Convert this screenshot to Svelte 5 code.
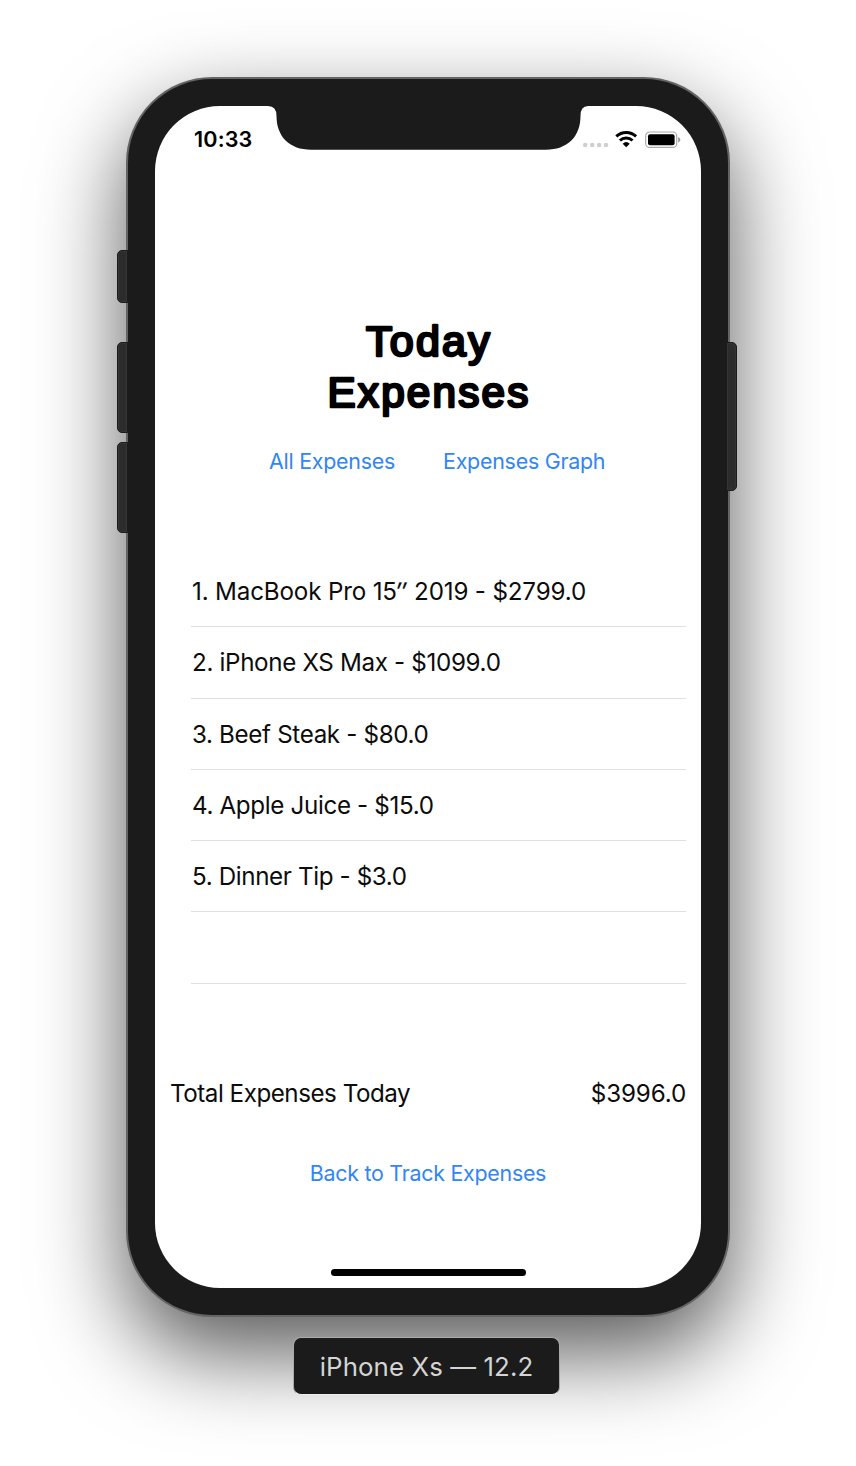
<script>
  const expenses = [
    { text: '1. MacBook Pro 15', mark: '″', rest: ' 2019 - $2799.0', spacing: -0.17 },
    { text: '2. iPhone XS Max - $1099.0', spacing: -0.34 },
    { text: '3. Beef Steak - $80.0', spacing: -0.35 },
    { text: '4. Apple Juice - $15.0', spacing: -0.35 },
    { text: '5. Dinner Tip - $3.0', spacing: -0.38 },
    { text: '', spacing: 0 }
  ];
</script>

<main class="page">
  <div class="phone">
    <i class="key mute"></i>
    <i class="key up"></i>
    <i class="key down"></i>
    <i class="key power"></i>
    <div class="screen">
      <svg class="notch" width="320" height="45" viewBox="0 0 320 45">
        <path d="M0-1V0Q8.5 0 8.5 10C8.5 31 22 43.7 43 43.7H278C299 43.7 312.5 31 312.5 10Q312.5 0 320 0V-1Z" fill="#1b1b1b" />
      </svg>
      <header class="status">
        <span class="time">10:33</span>
        <svg class="icons" width="100" height="20" viewBox="0 0 100 20">
          <g fill="#cfcfcf">
            <circle cx="4.2" cy="14" r="2.3" /><circle cx="11.2" cy="14" r="2.3" />
            <circle cx="18.1" cy="14" r="2.3" /><circle cx="25" cy="14" r="2.3" />
          </g>
          <g fill="none" stroke="#000" stroke-width="2.9">
            <path d="M35.3 5.4A14.4 14.4 0 0 1 55.1 5.4" />
            <path d="M38.9 9.5A9 9 0 0 1 51.5 9.5" />
          </g>
          <path d="M41.7 12.7A5.2 5.2 0 0 1 48.7 12.7L45.2 16.2Z" />
          <rect x="64.7" y="1" width="31" height="15.4" rx="4" fill="none" stroke="#aaa" stroke-width="1.2" />
          <rect x="67" y="3.2" width="26.6" height="11" rx="2" />
          <path d="M97.2 6.1Q99.4 7.2 99.4 8.8T97.2 11.5Z" fill="#999" />
        </svg>
      </header>
      <h1 class="title">
        <svg width="260" height="110" viewBox="0 0 260 110">
          <text x="131" y="37.7" textLength="126" lengthAdjust="spacingAndGlyphs" text-anchor="middle">Today</text>
          <text x="131" y="88.5" textLength="203" lengthAdjust="spacingAndGlyphs" text-anchor="middle">Expenses</text>
        </svg>
      </h1>
      <nav class="links">
        <a href="#all">All Expenses</a>
        <a href="#graph">Expenses Graph</a>
      </nav>
      <ul class="list">
        {#each expenses as item}
          <li style="letter-spacing: {item.spacing}px">{item.text}{#if item.mark}<span class="mark">{item.mark}</span>{item.rest}{/if}</li>
        {/each}
      </ul>
      <div class="total"><span>Total Expenses Today</span><span class="sum">$3996.0</span></div>
      <a class="back" href="#track">Back to Track Expenses</a>
      <div class="home"></div>
    </div>
  </div>
  <div class="label">iPhone Xs — 12.2</div>
</main>

<style>
  :global(body) { margin: 0; background: #fff; }
  .page {
    box-sizing: border-box; width: 856px; height: 1466px; padding-top: 77px; overflow: hidden;
    display: flex; flex-direction: column; align-items: center;
    font-family: Inter, "Liberation Sans", sans-serif; color: #0c0c0c;
  }
  .phone {
    position: relative; box-sizing: border-box; width: 604px; height: 1240px; flex: none;
    border: 2px solid #646464; border-radius: 86px; background: #1b1b1b; padding: 27px;
    box-shadow: 0 36px 88px rgba(0, 0, 0, .66);
  }
  .key {
    position: absolute; box-sizing: border-box; width: 11px; background: #2c2c2c;
    border: 1px solid #1b1b1b; box-shadow: inset 0 0 0 1px #353535; left: -11px; border-radius: 5px 0 0 5px;
  }
  .mute { top: 171px; height: 53px; }
  .up { top: 263px; height: 91px; }
  .down { top: 363px; height: 91px; }
  .power { left: auto; right: -9px; top: 263px; height: 149px; border-radius: 0 5px 5px 0; }
  .screen {
    position: relative; box-sizing: border-box; width: 546px; height: 1182px; background: #fff; border-radius: 65px;
    display: flex; flex-direction: column; overflow: hidden;
  }
  .notch { position: absolute; left: 113px; top: 0; }
  .status { box-sizing: border-box; display: flex; justify-content: space-between; align-items: flex-start; padding: 25px 20px 0 39px; height: 58px; }
  .time { font-size: 21.6px; line-height: 17px; font-weight: 600; color: #000; letter-spacing: .15px; }
  .title { margin: 154px auto 0; height: 110px; }
  .title svg { display: block; overflow: visible; }
  .title text {
    font: 400 42px "Liberation Sans", sans-serif; fill: #000; stroke: #000; letter-spacing: 2.2px;
    stroke-width: 2.6px; stroke-linejoin: round;
  }
  .links { display: flex; gap: 48px; padding-left: 114px; margin-top: 20px; }
  a { color: #2f86f6; text-decoration: none; font-size: 21.4px; line-height: 26px; white-space: nowrap; letter-spacing: -.24px; }
  .list { list-style: none; padding: 0; margin: 82px 15px 0 36px; }
  li { box-sizing: border-box; height: 71.25px; border-bottom: 1px solid #e0e0e0; font-size: 24.2px; line-height: 71px; padding-left: 1px; white-space: pre; }
  .mark { display: inline-block; transform: translateX(-1.5px) skewX(-12deg); -webkit-text-stroke: .2px #0c0c0c; }
  .total { display: flex; justify-content: space-between; padding: 0 15px; margin-top: 94px; font-size: 24.2px; line-height: 32px; letter-spacing: -.48px; }
  .sum { letter-spacing: -.15px; }
  .back { align-self: center; margin-top: 50px; letter-spacing: -.26px; }
  .home { width: 195px; height: 7px; border-radius: 4px; background: #000; margin: auto auto 12px; }
  .label {
    box-sizing: border-box; width: 267px; height: 58px; flex: none; margin: 20px 0 0 -3px; border-radius: 8px;
    border: 1px solid #aaa; border-bottom-color: #eee; background: #1b1b1b; color: #d4d4d4;
    text-align: center; font-size: 25.8px; line-height: 58px; letter-spacing: .1px; z-index: 1;
  }
</style>
